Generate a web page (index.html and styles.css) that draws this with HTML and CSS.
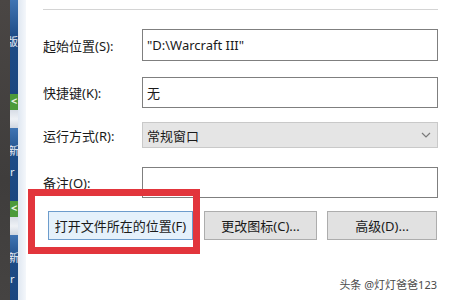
FILE: index.html
```html
<!DOCTYPE html>
<html>
<head>
<meta charset="utf-8">
<link rel="stylesheet" href="styles.css">
</head>
<body>
<div class="screen">
  <div class="strip">
    <div class="dark"></div>
    <div class="side">
      <div class="blue b1"><span class="g g1">版</span></div>
      <div class="green"><span class="gc">&lt;</span></div>
      <div class="pale"></div>
      <div class="blue b2"><span class="g g2">新</span><span class="g g3">r</span></div>
      <div class="green"><span class="gc">&lt;</span></div>
      <div class="pale"></div>
      <div class="blue b3"><span class="g g2">新</span><span class="g g3">r</span></div>
    </div>
    <div class="edge"></div>
  </div>
  <div class="dialog">
    <div class="sep"></div>
    <div class="row r1"><span class="lbl">起始位置(S):</span><div class="field">"D:\Warcraft III"</div></div>
    <div class="row r2"><span class="lbl">快捷键(K):</span><div class="field">无</div></div>
    <div class="row r3"><span class="lbl">运行方式(R):</span><div class="field select"><span>常规窗口</span><svg class="chev" width="10" height="6" viewBox="0 0 10 6"><polyline points="1,1 5,5 9,1" fill="none" stroke="#7a7a7a" stroke-width="1.2"/></svg></div></div>
    <div class="row r4"><span class="lbl">备注(O):</span><div class="field"></div></div>
    <div class="buttons">
      <div class="btn primary">打开文件所在的位置(F)</div>
      <div class="btn b-icon">更改图标(C)...</div>
      <div class="btn b-adv">高级(D)...</div>
    </div>
    <div class="mark">头条 @灯灯爸爸123</div>
    <div class="highlight"></div>
  </div>
</div>
</body>
</html>
```
FILE: styles.css
```css
* { box-sizing: border-box; }
html, body { margin: 0; padding: 0; }
body {
  width: 450px;
  height: 300px;
  overflow: hidden;
  background: #ffffff;
  font-family: "Noto Sans", "Noto Sans CJK SC", sans-serif;
  font-size: 13px;
  color: #1a1a1a;
}
.screen { display: flex; width: 450px; height: 300px; }
.strip { display: flex; width: 26px; height: 300px; flex: none; }
.dark { width: 10px; background: linear-gradient(#4a4644, #3f3d3c 60%, #454342); }
.side { width: 8px; display: flex; flex-direction: column; }
.edge { width: 8px; background: linear-gradient(90deg, #dfe7f1, #f4f7fb); }
.blue { background: linear-gradient(#3f74b3, #1d4b86 40%, #1a4680); position: relative; overflow: hidden; }
.b1 { height: 94px; }
.b2 { height: 73px; }
.b3 { flex: 1; }
.green { height: 16px; background: #4c9a3a; overflow: hidden; position: relative; }
.gc { position: absolute; left: 1px; top: -1px; color: #e8f3e0; font-size: 11px; font-weight: bold; }
.pale { height: 18px; background: linear-gradient(#d7dde6, #eef1f5 50%, #cfd6e0); }
.g { position: absolute; color: #e6ecf5; font-size: 11px; line-height: 1; }
.g1 { left: -3px; top: 36px; }
.g2 { left: -2px; top: 17px; }
.g3 { left: 0px; top: 38px; }
.dialog {
  position: relative;
  flex: 1;
  padding: 9px 12px 0 17px;
  display: flex;
  flex-direction: column;
}
.sep { height: 1px; background: #d4d4d4; }
.row { display: flex; align-items: center; }
.lbl { width: 99px; flex: none; white-space: nowrap; }
.field {
  flex: 1;
  height: 100%;
  border: 1px solid #7f7f7f;
  background: #fff;
  display: flex;
  align-items: center;
  padding-left: 4px;
  white-space: nowrap;
}
.r1 { margin-top: 19px; height: 32px; }
.r2 { margin-top: 16px; height: 31px; }
.r3 { margin-top: 14px; height: 26px; }
.r4 { margin-top: 19px; height: 31px; }
.select {
  background: #e5e5e5;
  border-color: #c9c9c9;
  justify-content: space-between;
  padding-right: 6px;
}
.chev { flex: none; }
.buttons { display: flex; margin-top: 13px; padding-left: 5px; gap: 11px; }
.btn {
  height: 29px;
  display: flex;
  align-items: center;
  justify-content: center;
  border: 1px solid #adadad;
  background: #e1e1e1;
  white-space: nowrap;
}
.primary { width: 145px; background: #e5f1fb; border-color: #6d9ccc; }
.b-icon { width: 113px; }
.b-adv { width: 110px; margin-left: -1px; }
.mark {
  margin-top: 36px;
  align-self: flex-end;
  font-size: 11px;
  color: #4a4a4a;
  padding-right: 1px;
}
.highlight {
  position: absolute;
  left: 2px;
  top: 189px;
  width: 172px;
  height: 65px;
  border: 7px solid #e2353c;
}
```
